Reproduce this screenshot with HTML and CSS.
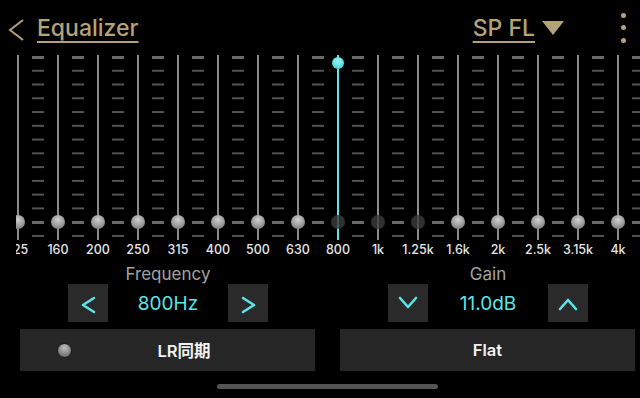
FILE: index.html
```html
<!DOCTYPE html>
<html lang="ja">
<head>
    <meta charset="UTF-8">
    <meta name="viewport" content="width=device-width, initial-scale=1.0">
    <title>Equalizer</title>
    <link rel="stylesheet" href="styles.css">
</head>
<body>
    <div class="header">
        <svg class="back" width="20" height="24" viewBox="0 0 20 24">
            <polyline points="17,2 4,12 17,22" fill="none" stroke="#b4a378" stroke-width="2" stroke-linejoin="miter"/>
        </svg>
        <div class="title">Equalizer</div>
        <div class="spacer"></div>
        <div class="channel">SP FL</div>
        <svg class="drop" width="22" height="14" viewBox="0 0 22 14">
            <polygon points="0,0 22,0 11,14" fill="#b4a378"/>
        </svg>
        <div class="kebab"><i></i><i></i><i></i></div>
    </div>

    <!-- バンド -->
    <div class="eq">
        <div class="band"><div class="track"><span class="knob"></span></div><div class="freq">125</div></div>
        <div class="band"><div class="track"><span class="knob"></span></div><div class="freq">160</div></div>
        <div class="band"><div class="track"><span class="knob"></span></div><div class="freq">200</div></div>
        <div class="band"><div class="track"><span class="knob"></span></div><div class="freq">250</div></div>
        <div class="band"><div class="track"><span class="knob"></span></div><div class="freq">315</div></div>
        <div class="band"><div class="track"><span class="knob"></span></div><div class="freq">400</div></div>
        <div class="band"><div class="track"><span class="knob"></span></div><div class="freq">500</div></div>
        <div class="band"><div class="track"><span class="knob"></span></div><div class="freq">630</div></div>
        <div class="band active"><div class="track"><span class="knob ghost"></span><span class="knob current"></span></div><div class="freq">800</div></div>
        <div class="band"><div class="track"><span class="knob ghost"></span></div><div class="freq">1k</div></div>
        <div class="band"><div class="track"><span class="knob ghost"></span></div><div class="freq">1.25k</div></div>
        <div class="band"><div class="track"><span class="knob"></span></div><div class="freq">1.6k</div></div>
        <div class="band"><div class="track"><span class="knob"></span></div><div class="freq">2k</div></div>
        <div class="band"><div class="track"><span class="knob"></span></div><div class="freq">2.5k</div></div>
        <div class="band"><div class="track"><span class="knob"></span></div><div class="freq">3.15k</div></div>
        <div class="band"><div class="track"><span class="knob"></span></div><div class="freq">4k</div></div>
    </div>

    <div class="controls">
        <div class="group">
            <div class="group-title">Frequency</div>
            <div class="stepper">
                <div class="step-btn">
                    <svg width="40" height="38" viewBox="0 0 40 38"><polyline points="26,14 15,21 26,28" fill="none" stroke="#5ce4e8" stroke-width="2.6" stroke-linecap="round" stroke-linejoin="round"/></svg>
                </div>
                <div class="step-value">800Hz</div>
                <div class="step-btn">
                    <svg width="40" height="38" viewBox="0 0 40 38"><polyline points="15,14 26,21 15,28" fill="none" stroke="#5ce4e8" stroke-width="2.6" stroke-linecap="round" stroke-linejoin="round"/></svg>
                </div>
            </div>
        </div>
        <div class="group">
            <div class="group-title">Gain</div>
            <div class="stepper">
                <div class="step-btn">
                    <svg width="40" height="38" viewBox="0 0 40 38"><polyline points="12,14 20,23 28,14" fill="none" stroke="#5ce4e8" stroke-width="2.6" stroke-linecap="round" stroke-linejoin="round"/></svg>
                </div>
                <div class="step-value">11.0dB</div>
                <div class="step-btn">
                    <svg width="40" height="38" viewBox="0 0 40 38"><polyline points="12,25 20,16 28,25" fill="none" stroke="#5ce4e8" stroke-width="2.6" stroke-linecap="round" stroke-linejoin="round"/></svg>
                </div>
            </div>
        </div>
    </div>

    <div class="actions">
        <div class="action sync">
            <span class="radio"></span>
            <span class="action-label">LR同期</span>
        </div>
        <div class="action">
            <span class="action-label">Flat</span>
        </div>
    </div>

    <div class="home-bar"></div>
</body>
</html>
```

FILE: styles.css
```css
* {
    margin: 0;
    padding: 0;
    box-sizing: border-box;
}

body {
    width: 640px;
    height: 398px;
    overflow: hidden;
    background: #000;
    color: #fff;
    font-family: Inter, "Noto Sans CJK JP", sans-serif;
}

/* ヘッダー */
.header {
    height: 55px;
    display: flex;
    align-items: center;
    padding: 0 14px 0 6px;
    color: #b4a378;
}

.back {
    margin-top: 4px;
}

.title,
.channel {
    font-size: 23px;
    font-weight: 500;
    line-height: 28px;
    text-decoration: underline;
    text-decoration-thickness: 2px;
    text-underline-offset: 5px;
}

.title {
    margin-left: 11px;
}

.spacer {
    flex: 1;
}

.drop {
    margin: 0 57px 0 7px;
}

.kebab {
    display: flex;
    flex-direction: column;
    gap: 7.5px;
}

.kebab i {
    width: 5px;
    height: 5px;
    border-radius: 50%;
    background: #b4a378;
}

/* スライダー */
.eq {
    margin-left: 16px;
    padding-left: 1px;
    display: flex;
    overflow: hidden;
}

.band {
    flex: none;
    width: 40px;
}

.track {
    position: relative;
    height: 185px;
    border-left: 2px solid #8a8a8a;
    background-origin: border-box;
    background-repeat: no-repeat, no-repeat, repeat-y;
    background-image:
        linear-gradient(#6a6a6a, #6a6a6a),
        linear-gradient(#6a6a6a, #6a6a6a),
        linear-gradient(to bottom, #545454 2px, transparent 2px);
    background-size: 12px 3px, 12px 3px, 12px 13.77px;
    background-position: 15px 1px, 15px 166px, 15px 1px;
}

.band.active .track {
    border-left-color: #5ce4e8;
}

.knob {
    position: absolute;
    left: -8px;
    top: 160px;
    width: 14px;
    height: 14px;
    border-radius: 50%;
    background: radial-gradient(circle at 50% 35%, #cfcfcf, #999 55%, #6e6e6e);
}

.knob.ghost {
    background: rgba(60, 60, 60, 0.8);
}

.knob.current {
    left: -7px;
    top: 2px;
    width: 12px;
    height: 12px;
    background: radial-gradient(circle at 50% 35%, #9ff3f5, #5cdfe3 55%, #3cbcc0);
}

.freq {
    width: 40px;
    margin: 2px 0 0 -19px;
    text-align: center;
    font-size: 12.5px;
    font-weight: 500;
    line-height: 16px;
    color: #e6e6e6;
    white-space: nowrap;
}

/* 周波数・ゲイン */
.controls {
    display: flex;
    gap: 120px;
    padding-left: 68px;
    margin-top: 7px;
}

.group {
    width: 200px;
}

.group-title {
    text-align: center;
    font-size: 17px;
    line-height: 19px;
    color: #a3a3a3;
}

.stepper {
    display: flex;
    align-items: center;
}

.step-btn {
    width: 40px;
    height: 38px;
    background: #2a2a2a;
}

.step-btn svg {
    display: block;
}

.step-value {
    flex: 1;
    text-align: center;
    font-size: 19px;
    color: #5ce4e8;
}

/* 下部ボタン */
.actions {
    display: flex;
    gap: 25px;
    padding-left: 20px;
    margin-top: 7px;
}

.action {
    width: 295px;
    height: 42px;
    display: flex;
    align-items: center;
    background: #262626;
}

.action.sync {
    padding: 0 19px 0 37px;
}

.radio {
    width: 15px;
    height: 15px;
    border-radius: 50%;
    border: 1px solid #1a1a1a;
    background: radial-gradient(circle at 50% 30%, #bdbdbd, #828282 60%, #5a5a5a);
}

.action-label {
    flex: 1;
    text-align: center;
    font-size: 16.5px;
    font-weight: 600;
    color: #f2f2f2;
}

.home-bar {
    width: 221px;
    height: 5px;
    margin: 13px 0 0 217px;
    border-radius: 3px;
    background: #555;
}
```
